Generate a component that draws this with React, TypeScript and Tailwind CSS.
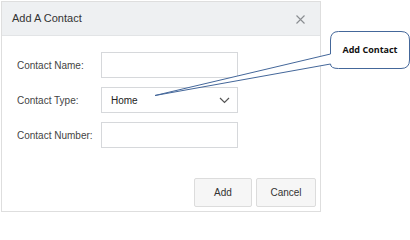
import React from "react";

const font = { fontFamily: '"Liberation Sans", Arial, sans-serif' };

function Row({ label, children }: { label: string; children: React.ReactNode }) {
  return (
    <div className="flex items-center h-[26px]">
      <div className="w-[84px] text-[10px] text-[#444]">{label}</div>
      {children}
    </div>
  );
}

export default function App() {
  return (
    <div className="relative w-[410px] h-[213px] bg-white overflow-hidden" style={font}>
      <div className="ml-[1px] mt-[1px] w-[320px] h-[211px] border border-[#dedede] flex flex-col bg-white">
        <div className="h-[34px] shrink-0 bg-[#eef0f2] border-b border-[#e2e4e6] flex items-center justify-between pl-[10px] pr-[15px]">
          <span className="text-[11px] text-[#333]">Add A Contact</span>
          <svg width="9" height="9" viewBox="0 0 9 9" className="mt-[1px]">
            <path d="M0.5 0.5L8.5 8.5M8.5 0.5L0.5 8.5" stroke="#8a8d91" strokeWidth="1.1" />
          </svg>
        </div>
        <div className="flex flex-col gap-[9px] pt-[16px] pl-[15px]">
          <Row label="Contact Name:">
            <div className="w-[137px] h-[26px] border border-[#d6d8db] bg-white" />
          </Row>
          <Row label="Contact Type:">
            <div className="w-[137px] h-[26px] border border-[#d6d8db] bg-white flex items-center justify-between pl-[9px] pr-[7px]">
              <span className="text-[10px] text-[#222]">Home</span>
              <svg width="11" height="7" viewBox="0 0 11 7">
                <path d="M1 1L5.5 5.5L10 1" stroke="#555" strokeWidth="1.2" fill="none" />
              </svg>
            </div>
          </Row>
          <Row label="Contact Number:">
            <div className="w-[137px] h-[26px] border border-[#d6d8db] bg-white" />
          </Row>
        </div>
        <div className="flex-1" />
        <div className="flex justify-end gap-[4px] pr-[4px] pb-[4px]">
          <button className="w-[58px] h-[29px] bg-[#f6f6f6] border border-[#dcdcdc] rounded-[2px] text-[10px] text-[#333]">
            Add
          </button>
          <button className="w-[60px] h-[29px] bg-[#f6f6f6] border border-[#dcdcdc] rounded-[2px] text-[10px] text-[#333]">
            Cancel
          </button>
        </div>
      </div>

      <svg className="absolute left-0 top-0" width="410" height="213" viewBox="0 0 410 213">
        <path
          d="M338.5 31.5 H401 Q409.5 31.5 409.5 40 V60 Q409.5 68.5 401 68.5 H338.5 Q330.5 68.5 330.5 64 L155 95.5 L330.5 54 V40 Q330.5 31.5 338.5 31.5 Z"
          fill="white"
          stroke="#44679a"
          strokeWidth="1"
        />
      </svg>
      <div className="absolute left-[330px] top-[31px] w-[80px] h-[37px] flex items-center justify-center">
        <span className="text-[9px] font-bold text-[#111]" style={{ fontFamily: '"Open Sans", "Liberation Sans", sans-serif' }}>
          Add Contact
        </span>
      </div>
    </div>
  );
}
